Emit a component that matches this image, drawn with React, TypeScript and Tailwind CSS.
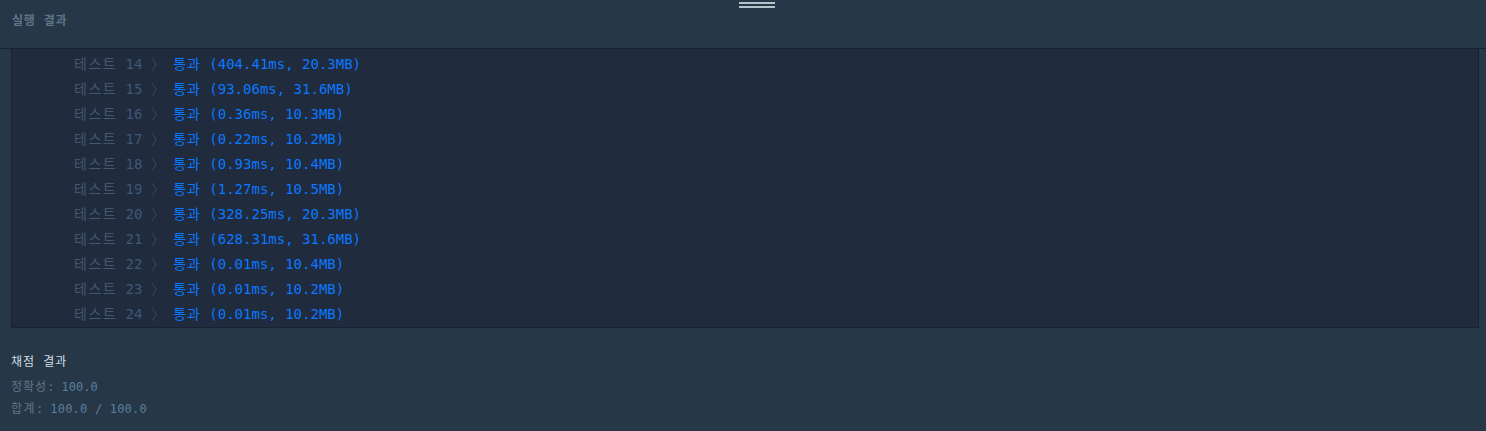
const results = [
  { n: 14, time: "404.41ms", mem: "20.3MB" },
  { n: 15, time: "93.06ms", mem: "31.6MB" },
  { n: 16, time: "0.36ms", mem: "10.3MB" },
  { n: 17, time: "0.22ms", mem: "10.2MB" },
  { n: 18, time: "0.93ms", mem: "10.4MB" },
  { n: 19, time: "1.27ms", mem: "10.5MB" },
  { n: 20, time: "328.25ms", mem: "20.3MB" },
  { n: 21, time: "628.31ms", mem: "31.6MB" },
  { n: 22, time: "0.01ms", mem: "10.4MB" },
  { n: 23, time: "0.01ms", mem: "10.2MB" },
  { n: 24, time: "0.01ms", mem: "10.2MB" },
];

const mono = "font-['DejaVu_Sans_Mono','Noto_Sans_CJK_KR',monospace]";

export default function App() {
  return (
    <div className={`w-full h-[431px] bg-[#263747] ${mono} overflow-hidden`}>
      <div className="relative h-[49px] border-b border-[#172334] pl-[12px] pt-[12px]">
        {/* drag handle */}
        <div className="absolute left-[739px] top-[2px] flex flex-col gap-[2px]">
          <div className="w-[36px] h-[2px] bg-[#b5c2ca]" />
          <div className="w-[36px] h-[2px] bg-[#b5c2ca]" />
        </div>
        <h3 className="text-[12px] leading-[18px] font-bold text-[#5e7488] tracking-[0.8px]">실행 결과</h3>
      </div>

      <div className="ml-[11px] mr-[7px] bg-[#202b3d] border-x border-b border-[#172334] pt-[2px] pb-[1px]">
        {results.map((r) => (
          <div key={r.n} className="h-[25px] leading-[27px] pl-[62px] text-[14px] whitespace-pre">
            <span className="text-[#45576b] tracking-[1.5px]">테스트</span>
            <span className="text-[#3f5877]"> {r.n} </span>
            <span className="text-[#35475a]">〉 </span>
            <span className="text-[#0a78ff]">
              <span className="tracking-[0.9px]">통과</span> ({r.time}, {r.mem})
            </span>
          </div>
        ))}
      </div>

      <div className="pl-[11px] pt-[24px]">
        <div className="text-[12px] leading-[20px] text-[#d5dde2] tracking-[1px]">채점 결과</div>
        <div className="mt-[4px] text-[12px] leading-[22px] whitespace-pre">
          <div>
            <span className="text-[#627486] tracking-[1px]">정확성</span>
            <span className="text-[#627486]">: </span>
            <span className="text-[#5a7f9e]">100.0</span>
          </div>
          <div>
            <span className="text-[#627486] tracking-[1.4px]">합계</span>
            <span className="text-[#627486]">: </span>
            <span className="text-[#5a7f9e] tracking-[0.2px]">100.0 / 100.0</span>
          </div>
        </div>
      </div>
    </div>
  );
}
